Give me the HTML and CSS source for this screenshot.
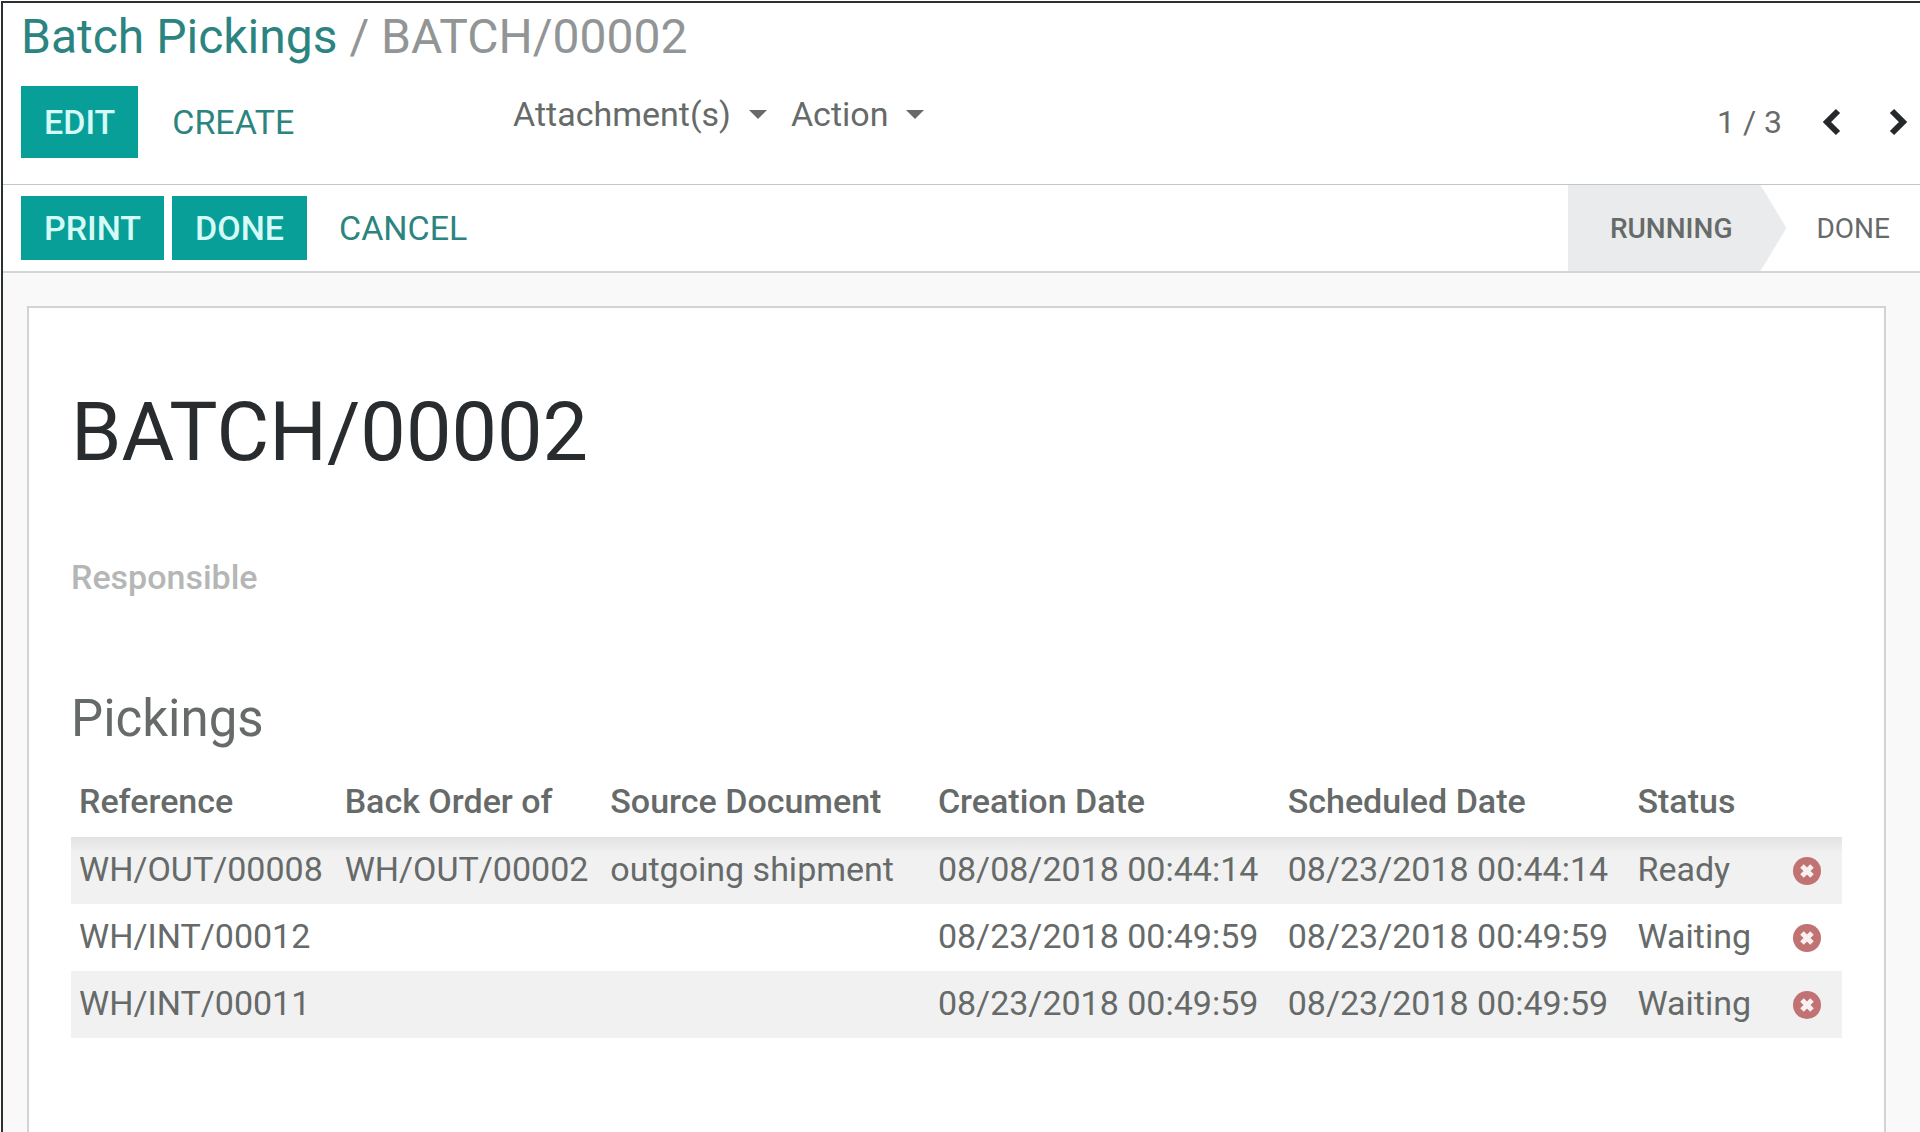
FILE: index.html
```html
<!DOCTYPE html>
<html lang="en">
<head>
  <meta charset="utf-8">
  <meta name="viewport" content="width=device-width, initial-scale=1.0">
  <title>Batch Pickings / BATCH/00002</title>
  <link rel="stylesheet" href="styles.css">
</head>

<body>
  <header class="control-panel">
    <nav class="breadcrumb">
      <a href="#">Batch Pickings</a>
      <span class="active">/ BATCH/00002</span>
    </nav>
    <div class="cp-row">
      <div class="cp-buttons">
        <button type="button" class="btn btn-primary btn-tall">EDIT</button>
        <button type="button" class="btn btn-link">CREATE</button>
      </div>
      <div class="cp-menus">
        <button type="button" class="menu">Attachment(s) <span class="caret"></span></button>
        <button type="button" class="menu">Action <span class="caret"></span></button>
      </div>
      <div class="pager">
        <span class="pager-value">1 / 3</span>
        <button type="button" class="pager-btn" aria-label="Previous">
          <svg width="20" height="28" viewBox="0 0 20 28"><path d="M16 3L5 14L16 25"/></svg>
        </button>
        <button type="button" class="pager-btn" aria-label="Next">
          <svg width="20" height="28" viewBox="0 0 20 28"><path d="M4 3L15 14L4 25"/></svg>
        </button>
      </div>
    </div>
  </header>

  <section class="statusbar">
    <div class="statusbar-buttons">
      <button type="button" class="btn btn-primary">PRINT</button>
      <button type="button" class="btn btn-primary">DONE</button>
      <button type="button" class="btn btn-link">CANCEL</button>
    </div>
    <div class="stages">
      <span class="stage current">RUNNING</span>
      <span class="stage">DONE</span>
    </div>
  </section>

  <main class="form-view">
    <article class="sheet">
      <h1>BATCH/00002</h1>
      <p class="field-label">Responsible</p>
      <h2>Pickings</h2>
      <table class="list">
        <colgroup>
          <col class="col-ref"><col class="col-ref"><col class="col-source"><col class="col-date"><col class="col-date"><col class="col-status"><col class="col-delete">
        </colgroup>
        <thead>
          <tr>
            <th>Reference</th>
            <th>Back Order of</th>
            <th>Source Document</th>
            <th>Creation Date</th>
            <th>Scheduled Date</th>
            <th>Status</th>
            <th></th>
          </tr>
        </thead>
        <tbody>
          <tr>
            <td>WH/OUT/00008</td><td>WH/OUT/00002</td><td>outgoing shipment</td><td>08/08/2018 00:44:14</td><td>08/23/2018 00:44:14</td><td>Ready</td>
            <td><button type="button" class="delete" aria-label="Delete"><svg width="30" height="30" viewBox="0 0 30 30"><circle cx="15" cy="15" r="14"/><path d="M10 10L20 20M20 10L10 20"/></svg></button></td>
          </tr>
          <tr>
            <td>WH/INT/00012</td><td></td><td></td><td>08/23/2018 00:49:59</td><td>08/23/2018 00:49:59</td><td>Waiting</td>
            <td><button type="button" class="delete" aria-label="Delete"><svg width="30" height="30" viewBox="0 0 30 30"><circle cx="15" cy="15" r="14"/><path d="M10 10L20 20M20 10L10 20"/></svg></button></td>
          </tr>
          <tr>
            <td>WH/INT/00011</td><td></td><td></td><td>08/23/2018 00:49:59</td><td>08/23/2018 00:49:59</td><td>Waiting</td>
            <td><button type="button" class="delete" aria-label="Delete"><svg width="30" height="30" viewBox="0 0 30 30"><circle cx="15" cy="15" r="14"/><path d="M10 10L20 20M20 10L10 20"/></svg></button></td>
          </tr>
        </tbody>
      </table>
    </article>
  </main>
</body>
</html>
```

FILE: styles.css
```css
* {
  box-sizing: border-box;
}

html {
  background: #fff;
}

body {
  margin: 1px 0 0 1px;
  min-height: calc(100vh - 1px);
  display: flex;
  flex-direction: column;
  border-top: 2px solid #2b3033;
  border-left: 2px solid #2b3033;
  background: #fff;
  color: #666a69;
  font-family: Roboto, "Liberation Sans", sans-serif;
  font-size: 34px;
  line-height: 56px;
}

button {
  margin: 0;
  padding: 0;
  border: 0;
  background: none;
  color: inherit;
  font: inherit;
  cursor: pointer;
}

/* top bar */
.control-panel {
  padding: 6px 12px 26px 18px;
  border-bottom: 1px solid #c4c6c6;
}

.breadcrumb {
  margin-bottom: 21px;
  font-size: 48px;
  color: #929595;
}

.breadcrumb a {
  color: #2b8480;
  text-decoration: none;
}

.cp-row {
  display: flex;
}

.cp-buttons {
  display: flex;
  width: 492px;
}

.btn {
  height: 64px;
  padding: 0 23px;
  line-height: 62px;
}

.btn-tall {
  height: 72px;
  line-height: 70px;
}

.btn-primary {
  background: #099f99;
  color: #d5fbf8;
  font-weight: 500;
}

.btn-link {
  color: #2b8480;
  align-self: center;
  padding: 0 34px;
}

.cp-menus {
  display: flex;
  align-items: flex-start;
  gap: 24px;
}

.menu {
  display: flex;
  align-items: center;
  gap: 18px;
}

.caret {
  border-top: 9px solid #666a69;
  border-left: 9px solid transparent;
  border-right: 9px solid transparent;
}

.pager {
  display: flex;
  align-items: center;
  gap: 40px;
  margin-left: auto;
  font-size: 32px;
}

.pager-btn {
  display: flex;
}

.pager-btn + .pager-btn {
  margin-left: 6px;
}

.pager-btn path {
  fill: none;
  stroke: #25292a;
  stroke-width: 6;
}

/* status bar */
.statusbar {
  display: flex;
  justify-content: space-between;
  height: 88px;
  padding-left: 18px;
  border-bottom: 2px solid #d4d6d6;
}

.statusbar-buttons {
  display: flex;
  align-items: center;
  gap: 8px;
}

.statusbar .btn-link {
  padding: 0 24px;
}

.stages {
  display: flex;
  font-size: 28px;
  line-height: 88px;
}

.stage {
  padding: 0 30px;
}

.stage.current {
  padding: 0 54px 0 42px;
  background: #e9ebec;
  font-weight: 500;
  clip-path: polygon(0 0, calc(100% - 26px) 0, 100% 50%, calc(100% - 26px) 100%, 0 100%);
}

/* form */
.form-view {
  flex: 1;
  display: flex;
  padding: 33px 34px 0 24px;
  background: #f9f9f9;
}

.sheet {
  flex: 1;
  padding: 77px 42px 0 42px;
  border: 2px solid #d2d4d4;
  border-bottom: 0;
  background: #fff;
}

h1, h2, p {
  margin: 0;
  font-weight: 400;
}

h1 {
  margin-bottom: 68px;
  color: #282c2e;
  font-size: 81px;
  line-height: 96px;
}

.field-label {
  margin-bottom: 86px;
  color: #b5b7b7;
  font-weight: 500;
}

h2 {
  margin-bottom: 23px;
  font-size: 51px;
}

.list {
  width: 100%;
  table-layout: fixed;
  border-collapse: collapse;
}

.col-ref {
  width: 15%;
}

.col-source {
  width: 18.5%;
}

.col-date {
  width: 19.75%;
}

.col-status {
  width: 8%;
}

.col-delete {
  width: 4%;
}

.list th,
.list td {
  height: 67px;
  padding: 0 0 4px 8px;
  text-align: left;
  white-space: nowrap;
}

.list th {
  padding-bottom: 6px;
  font-weight: 500;
}

.list tbody tr:nth-child(odd) {
  background: #f1f1f1;
}

/* shadow under the header row */
.list tbody tr:first-child {
  background: linear-gradient(#e2e2e2, #f1f1f1 16px);
}

.list td:last-child {
  padding: 0;
}

.delete {
  display: flex;
  margin: 0 auto;
}

.delete circle {
  fill: #c17273;
}

.delete path {
  stroke: #f8f1f1;
  stroke-width: 5;
}
```
